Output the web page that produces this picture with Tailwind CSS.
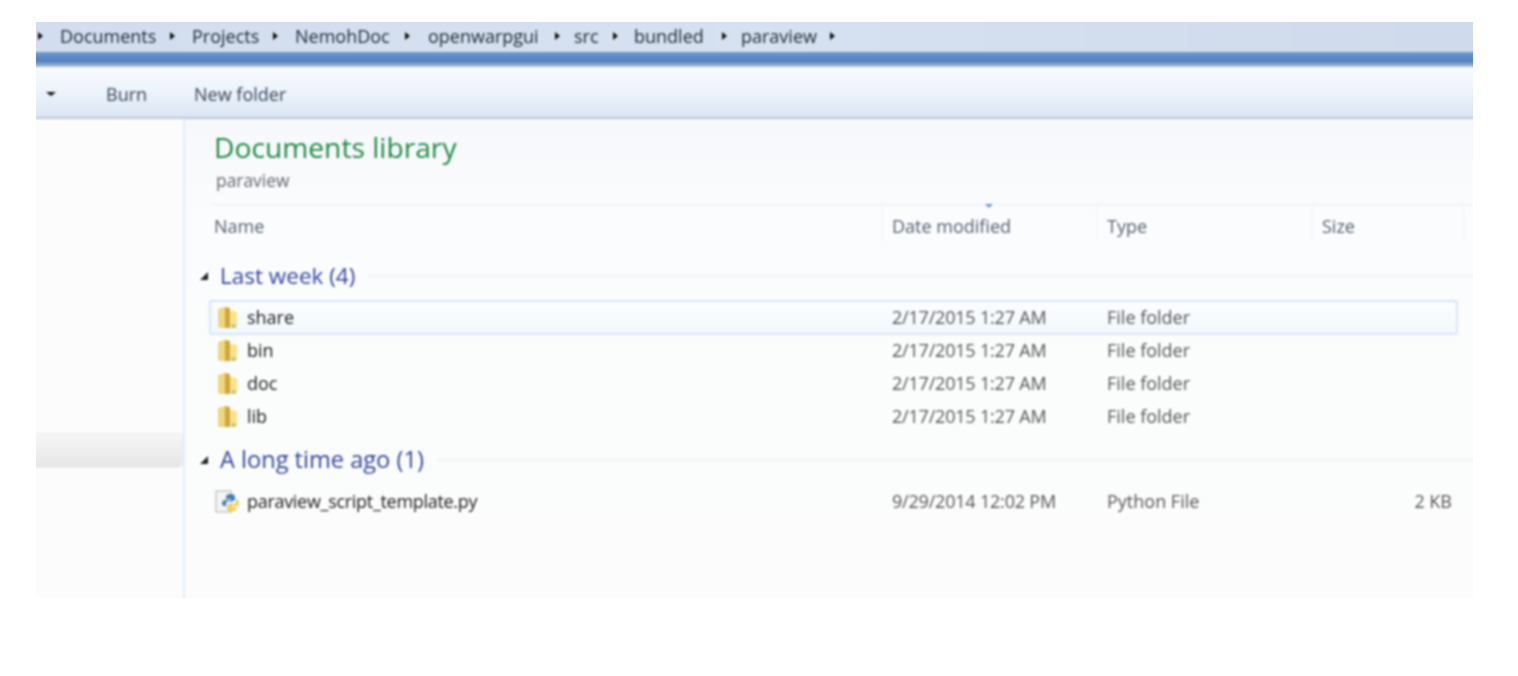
<!DOCTYPE html>
<html lang="en">

<head>
    <meta charset="UTF-8">
    <meta name="viewport" content="width=device-width, initial-scale=1.0">
    <script src="https://cdn.jsdelivr.net/npm/@tailwindcss/browser@4"></script>
    <title>Documents library</title>
</head>

<body class="bg-white font-['Open_Sans',sans-serif] overflow-hidden">
    <div class="pt-[22px] pl-[36px]">
        <div class="w-[1437px] h-[576px] bg-[#fcfcfc] overflow-hidden">
            <!-- whole capture is soft, so the blur sits on one wrapper; it overhangs 3px so the window edge stays sharp -->
            <div class="w-[1443px] h-[582px] -ml-[3px] -mt-[3px] flex flex-col [filter:blur(1px)]">

                <!-- Address bar -->
                <div class="h-[33px] pt-[1px] flex items-center bg-gradient-to-r from-[#d2deef] via-[#d6e1f1] to-[#cfdbec] text-[18px] text-[#1f2833]">
                    <span class="ml-[5px] w-0 h-0 border-y-[4px] border-y-transparent border-l-[5px] border-l-[#111]"></span>
                    <span class="ml-[17px] w-[110px]">Documents</span>
                    <span class="w-0 h-0 border-y-[4px] border-y-transparent border-l-[5px] border-l-[#111]"></span>
                    <span class="ml-[17px] w-[81px]">Projects</span>
                    <span class="w-0 h-0 border-y-[4px] border-y-transparent border-l-[5px] border-l-[#111]"></span>
                    <span class="ml-[17px] w-[110px]">NemohDoc</span>
                    <span class="w-0 h-0 border-y-[4px] border-y-transparent border-l-[5px] border-l-[#111]"></span>
                    <span class="ml-[18px] w-[127px]">openwarpgui</span>
                    <span class="w-0 h-0 border-y-[4px] border-y-transparent border-l-[5px] border-l-[#111]"></span>
                    <span class="ml-[14px] w-[39px]">src</span>
                    <span class="w-0 h-0 border-y-[4px] border-y-transparent border-l-[5px] border-l-[#111]"></span>
                    <span class="ml-[16px] w-[88px]">bundled</span>
                    <span class="w-0 h-0 border-y-[4px] border-y-transparent border-l-[5px] border-l-[#111]"></span>
                    <span class="ml-[14px] w-[89px]">paraview</span>
                    <span class="w-0 h-0 border-y-[4px] border-y-transparent border-l-[5px] border-l-[#111]"></span>
                </div>

                <!-- Blue strip under address bar -->
                <div class="h-[15px] bg-gradient-to-b from-[#7399cd] via-[#4f80c2] via-60% to-[#b4c3d6]"></div>

                <!-- Toolbar -->
                <div class="h-[52px] pt-[4px] flex items-center bg-gradient-to-b from-[#f8fafe] via-[#eef4fb] via-45% to-[#dbe6f3] border-b-2 border-[#bccadb] text-[18px] text-[#34465c]">
                    <span class="ml-[13px] w-0 h-0 border-x-[5px] border-x-transparent border-t-[4px] border-t-[#111]"></span>
                    <span class="ml-[50px]">Burn</span>
                    <span class="ml-[47px]">New folder</span>
                </div>

                <div class="flex-1 flex min-h-0">
                    <!-- Nav pane -->
                    <div class="w-[152px] shrink-0 border-r-2 border-[#e3edf8] pt-[314px]">
                        <div class="h-[35px] rounded-r-[5px] bg-gradient-to-b from-[#f6f6f6] to-[#e6e6e6] border border-l-0 border-[#eeeeee]"></div>
                    </div>

                    <!-- Library pane -->
                    <div class="flex-1 min-w-0 flex flex-col bg-gradient-to-b from-[#f6f8fc] via-[#fbfcfd] via-20% to-[#fcfcfc]">
                        <div class="pl-[29px] pt-[9px] h-[85px]">
                            <h1 class="text-[28.2px] leading-[38px] text-[#1f8a42]">Documents library</h1>
                            <p class="mt-[2px] pl-[2px] text-[17.4px] leading-[24px] text-[#63666c]">paraview</p>
                        </div>

                        <!-- Column headers -->
                        <div class="ml-[28px] h-[56px] grid grid-cols-[669px_215px_215px_151px_10px] border-t border-[#e9eff6] text-[18px] text-[#556070] relative">
                            <span class="pt-[6px] leading-[30px] pl-[1px]">Name</span>
                            <span class="pt-[6px] leading-[30px] pl-[9px] border-l border-[#edf1f6] mb-[27px]">Date modified</span>
                            <span class="pt-[6px] leading-[30px] pl-[9px] border-l border-[#edf1f6] mb-[27px]">Type</span>
                            <span class="pt-[6px] leading-[30px] pl-[9px] border-l border-[#edf1f6] mb-[27px]">Size</span>
                            <span class="border-l border-[#edf1f6] mb-[27px]"></span>
                            <span class="absolute left-[772px] -top-[1px] w-0 h-0 border-x-[4px] border-x-transparent border-t-[4px] border-t-[#5c9bd6]"></span>
                        </div>

                        <!-- Group: Last week -->
                        <div class="h-[32px] pl-[15px] flex items-center">
                            <span class="w-0 h-0 border-l-[8px] border-l-transparent border-b-[8px] border-b-[#222]"></span>
                            <span class="ml-[12px] text-[22.5px] text-[#34479f]">Last week (4)</span>
                            <span class="ml-[13px] flex-1 h-[2px] bg-[#f0f1f3]"></span>
                        </div>

                        <div class="flex flex-col mt-[8px]">
                            <!-- share (hot row) -->
                            <div class="ml-[24px] mr-[18px] h-[35px] grid grid-cols-[36px_645px_215px_1fr_80px] items-center rounded-[3px] border-2 border-[#d5e6f8] bg-gradient-to-b from-[#fbfdff] to-[#f3f8fe] -mb-[1px]">
                                <span class="pl-[6px]">
                                    <svg class="w-[21px] h-[23px]" viewBox="0 0 21 23"><path d="M1 3l7-2v21H3a2 2 0 0 1-2-2z" fill="#f0d777"/><path d="M8 1l5 1v20H8z" fill="#cfa63e"/><path d="M13 5l7 1v14a2 2 0 0 1-2 2h-5z" fill="#f7e38d"/><path d="M15 18l4 1-1 3h-3z" fill="#a9c98d"/></svg>
                                </span>
                                <span class="text-[18px] text-[#1a1a1a] font-medium">share</span>
                                <span class="text-[18px] text-[#555] tracking-[-0.2px]">2/17/2015 1:27 AM</span>
                                <span class="text-[18px] text-[#555]">File folder</span>
                                <span></span>
                            </div>
                            <!-- bin -->
                            <div class="ml-[24px] mr-[18px] h-[33px] px-[2px] grid grid-cols-[36px_645px_215px_1fr_80px] items-center">
                                <span class="pl-[6px]">
                                    <svg class="w-[21px] h-[23px]" viewBox="0 0 21 23"><path d="M1 3l7-2v21H3a2 2 0 0 1-2-2z" fill="#f0d777"/><path d="M8 1l5 1v20H8z" fill="#cfa63e"/><path d="M13 5l7 1v14a2 2 0 0 1-2 2h-5z" fill="#f7e38d"/><path d="M15 18l4 1-1 3h-3z" fill="#a9c98d"/></svg>
                                </span>
                                <span class="text-[18px] text-[#1a1a1a] font-medium">bin</span>
                                <span class="text-[18px] text-[#555] tracking-[-0.2px]">2/17/2015 1:27 AM</span>
                                <span class="text-[18px] text-[#555]">File folder</span>
                                <span></span>
                            </div>
                            <!-- doc -->
                            <div class="ml-[24px] mr-[18px] h-[33px] px-[2px] grid grid-cols-[36px_645px_215px_1fr_80px] items-center">
                                <span class="pl-[6px]">
                                    <svg class="w-[21px] h-[23px]" viewBox="0 0 21 23"><path d="M1 3l7-2v21H3a2 2 0 0 1-2-2z" fill="#f0d777"/><path d="M8 1l5 1v20H8z" fill="#cfa63e"/><path d="M13 5l7 1v14a2 2 0 0 1-2 2h-5z" fill="#f7e38d"/><path d="M15 18l4 1-1 3h-3z" fill="#a9c98d"/></svg>
                                </span>
                                <span class="text-[18px] text-[#1a1a1a] font-medium">doc</span>
                                <span class="text-[18px] text-[#555] tracking-[-0.2px]">2/17/2015 1:27 AM</span>
                                <span class="text-[18px] text-[#555]">File folder</span>
                                <span></span>
                            </div>
                            <!-- lib -->
                            <div class="ml-[24px] mr-[18px] h-[33px] px-[2px] grid grid-cols-[36px_645px_215px_1fr_80px] items-center">
                                <span class="pl-[6px]">
                                    <svg class="w-[21px] h-[23px]" viewBox="0 0 21 23"><path d="M1 3l7-2v21H3a2 2 0 0 1-2-2z" fill="#f0d777"/><path d="M8 1l5 1v20H8z" fill="#cfa63e"/><path d="M13 5l7 1v14a2 2 0 0 1-2 2h-5z" fill="#f7e38d"/><path d="M15 18l4 1-1 3h-3z" fill="#a9c98d"/></svg>
                                </span>
                                <span class="text-[18px] text-[#1a1a1a] font-medium">lib</span>
                                <span class="text-[18px] text-[#555] tracking-[-0.2px]">2/17/2015 1:27 AM</span>
                                <span class="text-[18px] text-[#555]">File folder</span>
                                <span></span>
                            </div>
                        </div>

                        <!-- Group: A long time ago -->
                        <div class="h-[32px] mt-[11px] pl-[15px] flex items-center">
                            <span class="w-0 h-0 border-l-[8px] border-l-transparent border-b-[8px] border-b-[#222]"></span>
                            <span class="ml-[12px] text-[23.6px] text-[#34479f]">A long time ago (1)</span>
                            <span class="ml-[13px] flex-1 h-[2px] bg-[#f0f1f3]"></span>
                        </div>

                        <div class="ml-[24px] mr-[18px] mt-[9px] h-[33px] px-[2px] grid grid-cols-[36px_645px_215px_1fr_80px] items-center">
                            <span class="pl-[3px]">
                                <svg class="w-[26px] h-[24px]" viewBox="0 0 26 24">
                                    <path d="M2 1h15v21H2z" fill="#f4f4f4" stroke="#c9c9c9" stroke-width="1.5"/>
                                    <path d="M17 4c-3 0-5 1-5 3v2h5v1h-6c-2 0-3 2-3 3 0 2 1 3 2 3h2v-2c0-2 1-3 3-3h4c1 0 2-1 2-2V7c0-2-2-3-4-3z" fill="#3d7fb8"/>
                                    <path d="M22 9v2c0 2-1 3-3 3h-4c-1 0-2 1-2 2v3c0 2 2 3 4 3s5-1 5-3v-2h-5v-1h6c2 0 2-2 2-4 0-2-1-3-3-3z" fill="#f5cf56"/>
                                </svg>
                            </span>
                            <span class="text-[18px] text-[#1a1a1a] font-medium tracking-[-0.3px]">paraview_script_template.py</span>
                            <span class="text-[18px] text-[#555] tracking-[-0.2px]">9/29/2014 12:02 PM</span>
                            <span class="text-[18px] text-[#555]">Python File</span>
                            <span class="text-right text-[18px] text-[#555] pr-[4px]">2 KB</span>
                        </div>
                    </div>
                </div>
            </div>
        </div>
    </div>
</body>

</html>
